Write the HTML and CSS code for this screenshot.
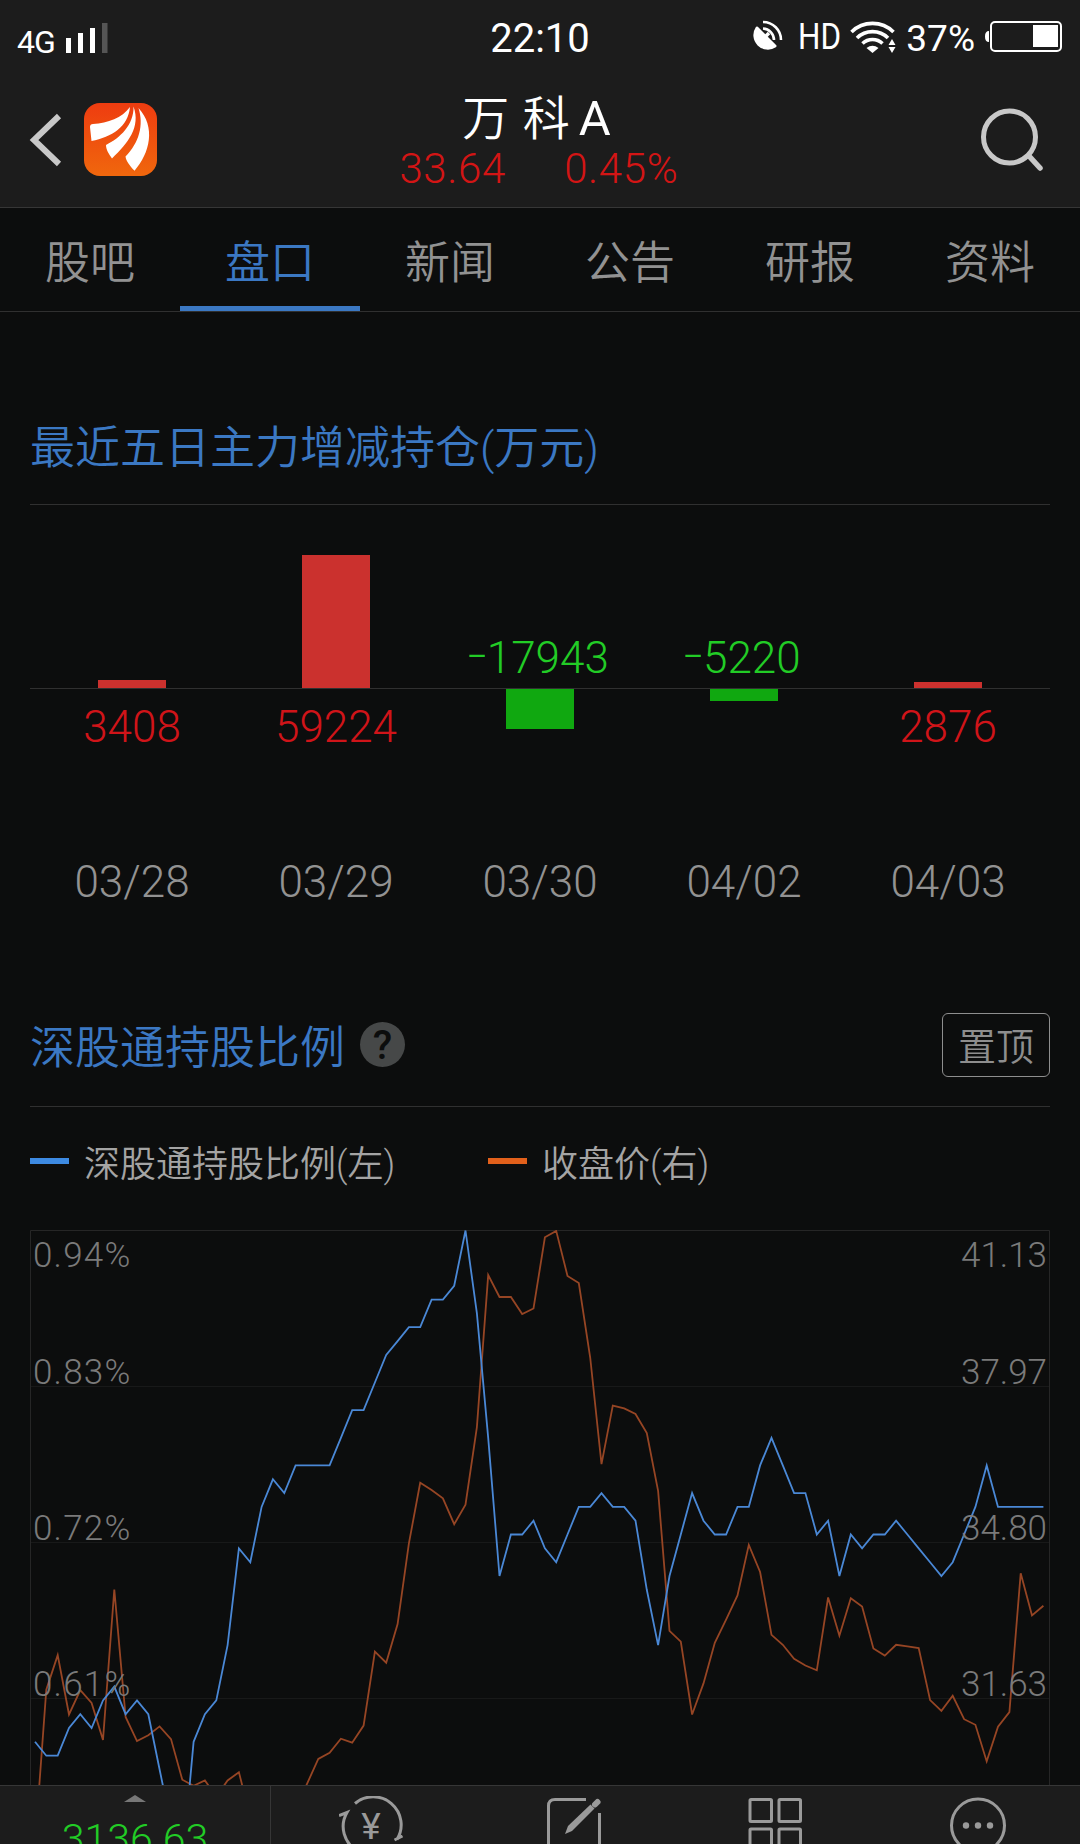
FILE: index.html
```html
<!DOCTYPE html>
<html lang="zh-CN">
<head>
    <meta charset="UTF-8">
    <meta name="viewport" content="width=device-width, initial-scale=1.0">
    <title>万科A</title>
    <link rel="stylesheet" href="styles.css">
</head>
<body>
    <header class="header">
        <div class="status-bar">
            <div class="status-left">
                <span class="network">4G</span>
                <svg class="signal" width="42" height="30" viewBox="0 0 42 30">
                    <path d="M0 15h5v15h-5zM12 10h5v20h-5zM24 5h5v25h-5z" fill="#fff"/>
                    <path d="M36 0h5.500v30h-5.500z" fill="#555"/>
                </svg>
            </div>
            <div class="clock">22:10</div>
            <div class="status-right">
                <svg width="31" height="31" viewBox="0 0 31 31">
                    <path d="M5 8L23 26A13 13 0 0 1 5 8Z" fill="#fff" stroke="#fff" stroke-width="3" stroke-linejoin="round"/>
                    <path d="M13 17L17 13" stroke="#fff" stroke-width="3.500"/>
                    <path d="M11 8.500A11.500 11.500 0 0 1 22 20M11 2A18 18 0 0 1 29 20" fill="none" stroke="#fff" stroke-width="2.600"/>
                </svg>
                <span class="hd">HD</span>
                <svg class="wifi" width="46" height="34" viewBox="0 0 46 34">
                    <g fill="none" stroke="#fff" stroke-width="3.600">
                        <path d="M1.500 12A30 30 0 0 1 43.500 12"/>
                        <path d="M7 18A22 22 0 0 1 38 18"/>
                        <path d="M12.500 23.500A14.500 14.500 0 0 1 32.500 23.500"/>
                    </g>
                    <path d="M16.500 28Q22.500 23.500 28.500 28L22.500 33Z" fill="#fff"/>
                    <path d="M38.500 25L42 19L45.500 25ZM38.500 27L42 33L45.500 27Z" fill="#fff"/>
                </svg>
                <span class="percent">37%</span>
                <svg class="battery" width="78" height="32" viewBox="0 0 78 32">
                    <path d="M4 11v11q-4 0 -4 -5.500t4 -5.500z" fill="#fff"/>
                    <rect x="6" y="2" width="70" height="29" rx="4" fill="none" stroke="#fff" stroke-width="2"/>
                    <rect x="48" y="5" width="25" height="22" fill="#fff"/>
                </svg>
            </div>
        </div>
        <div class="title-bar">
            <div class="title-left">
                <svg class="back" width="34" height="58" viewBox="0 0 34 58">
                    <path d="M31 5L6 29L31 53" fill="none" stroke="#c8c8c8" stroke-width="6"/>
                </svg>
                <svg class="logo" width="73" height="73" viewBox="0 0 73 73">
                    <defs>
                        <linearGradient id="logo-bg" x1="0" y1="0" x2="0" y2="1">
                            <stop offset="0" stop-color="#ee3c10"/>
                            <stop offset="1" stop-color="#f0670d"/>
                        </linearGradient>
                    </defs>
                    <rect width="73" height="73" rx="16" fill="url(#logo-bg)"/>
                    <g fill="#fff">
                        <path d="M6 24Q6 21.200 9 21C24 20 38 15 46 4C44 24 28 34 7.500 38Z"/>
                        <path d="M49.500 3.500C57 24 44 40 28 55.500C25 51 22 47 22 42C36 35 50 22 49.500 3.500Z"/>
                        <path d="M54.500 5C72 24 66 50 50.500 67.700C46 63 42 58 41.500 53.500C55 40 60 22 54.500 5Z"/>
                    </g>
                </svg>
            </div>
            <div class="stock">
                <div class="stock-name">万 科<span>A</span></div>
                <div class="stock-price"><span>33.64</span><span>0.45%</span></div>
            </div>
            <svg class="search" width="66" height="66" viewBox="0 0 66 66">
                <circle cx="31.500" cy="30" r="26" fill="none" stroke="#c8c8c8" stroke-width="5"/>
                <path d="M51 49L62 61" stroke="#c8c8c8" stroke-width="5.500" stroke-linecap="round"/>
            </svg>
        </div>
    </header>

    <nav class="tabs">
        <a class="tab">股吧</a>
        <a class="tab active">盘口</a>
        <a class="tab">新闻</a>
        <a class="tab">公告</a>
        <a class="tab">研报</a>
        <a class="tab">资料</a>
    </nav>

    <main class="content">
        <section class="holdings">
            <h2 class="section-title">最近五日主力增减持仓(万元)</h2>
            <div class="bars" id="bars"></div>
        </section>

        <section class="ratio">
            <div class="section-title ratio-title">
                <h2>深股通持股比例</h2>
                <span class="help">?</span>
                <button class="pin">置顶</button>
            </div>
            <div class="legend">
                <span class="legend-item"><i class="dash blue"></i>深股通持股比例(左)</span>
                <span class="legend-item"><i class="dash orange"></i>收盘价(右)</span>
            </div>
            <svg class="chart" id="chart" width="1020" height="624" viewBox="0 0 1020 624"></svg>
        </section>
    </main>

    <footer class="bottom-bar">
        <div class="index">
            <span class="arrow-up"></span>
            <span class="index-value">3136.63</span>
        </div>
        <div class="action">
            <svg width="66" height="60" viewBox="0 0 66 60">
                <g fill="none" stroke="#9a9a9a" stroke-width="3">
                    <path d="M16 7.500A28 28 0 0 1 58 43.500M55.500 44L63.500 40"/>
                    <path d="M0 19.500L8 16.500A28 28 0 0 0 18.500 55"/>
                </g>
                <text x="32" y="43" class="yen">¥</text>
            </svg>
        </div>
        <div class="action">
            <svg width="60" height="60" viewBox="0 0 60 60">
                <path d="M42 3.500H11Q4.500 3.500 4.500 10V60M55.500 17V60" fill="none" stroke="#9a9a9a" stroke-width="3"/>
                <path d="M21 38L24 30L46.500 8.500L50.500 12.500L28 35Z" fill="#9a9a9a"/>
                <path d="M51 8.500L53.500 6" stroke="#9a9a9a" stroke-width="6" stroke-linecap="round"/>
            </svg>
        </div>
        <div class="action">
            <svg width="60" height="60" viewBox="0 0 60 60">
                <g fill="none" stroke="#9a9a9a" stroke-width="3">
                    <rect x="3" y="3.500" width="21.500" height="22" rx="1"/>
                    <rect x="32" y="3.500" width="21.500" height="22" rx="1"/>
                    <rect x="3" y="33" width="21.500" height="22" rx="1"/>
                    <rect x="32" y="33" width="21.500" height="22" rx="1"/>
                </g>
            </svg>
        </div>
        <div class="action">
            <svg width="60" height="60" viewBox="0 0 60 60">
                <circle cx="29" cy="29.500" r="26.500" fill="none" stroke="#9a9a9a" stroke-width="3"/>
                <g fill="#9a9a9a">
                    <circle cx="17" cy="29.500" r="3.200"/>
                    <circle cx="29" cy="29.500" r="3.200"/>
                    <circle cx="41" cy="29.500" r="3.200"/>
                </g>
            </svg>
        </div>
    </footer>

    <script>
        const days = [
            { date: "03/28", value: 3408 },
            { date: "03/29", value: 59224 },
            { date: "03/30", value: -17943 },
            { date: "04/02", value: -5220 },
            { date: "04/03", value: 2876 }
        ];

        // distance below the 0.94% maximum, in steps of 0.01%
        const ratioDrop = [
            37, 38, 38, 36, 35, 36, 34, 33, 35, 34, 35, 39, 43, 46, 37, 35, 34, 30,
            23, 24, 20, 18, 19, 17, 17, 17, 17, 15, 13, 13, 11, 9, 8, 7, 7, 5,
            5, 4, 0, 6, 15, 25, 22, 22, 21, 23, 24, 22, 20, 20, 19, 20, 20, 21,
            26, 30, 25, 22, 19, 21, 22, 22, 20, 20, 17, 15, 17, 19, 19, 22, 21, 25,
            22, 23, 22, 22, 21, 22, 23, 24, 25, 24, 22, 20, 17, 20, 20, 20, 20, 20
        ];

        // distance below the 41.13 maximum, in chart units
        const priceDrop = [
            1542, 1154, 1067, 1216, 1155, 1187, 1280, 902, 1222, 1283, 1268, 1246, 1278, 1380, 1395, 1382, 1422, 1382,
            1361, 1474, 1514, 1534, 1514, 1454, 1391, 1328, 1312, 1277, 1287, 1244, 1058, 1086, 989, 786, 634, 652,
            673, 738, 689, 494, 112, 167, 167, 210, 196, 17, 1, 114, 132, 319, 587, 440, 447, 461,
            509, 654, 1006, 1033, 1216, 1138, 1036, 978, 917, 790, 858, 1016, 1041, 1076, 1093, 1105, 922, 1018,
            924, 945, 1050, 1068, 1041, 1045, 1049, 1180, 1207, 1169, 1228, 1242, 1334, 1247, 1210, 861, 967, 943
        ];

        const bars = document.getElementById("bars");
        const chart = document.getElementById("chart");

        days.forEach(day => {
            const up = day.value > 0;
            const height = Math.round(Math.abs(day.value) / 59224 * 133);
            const bar = `<div class="bar" style="height: ${height}px"></div>`;
            const sign = up ? "" : `<span class="sign">-</span>`;
            const label = `<div class="value">${sign}${Math.abs(day.value)}</div>`;
            bars.innerHTML += `
                <div class="day ${up ? "up" : "down"}">
                    <div class="above">${up ? bar : label}</div>
                    <div class="below">${up ? label : bar}</div>
                    <div class="date">${day.date}</div>
                </div>`;
        });

        function line(values, scale, className) {
            const points = values.map((v, i) => `${(5 + i * 11.33).toFixed(1)},${(0.5 + v * scale).toFixed(1)}`);
            return `<polyline class="${className}" points="${points.join(" ")}"/>`;
        }

        let svg = `<path class="frame" d="M0.5 624V0.5H1019.5V624"/>`;
        [156, 312, 468].forEach(y => {
            svg += `<path class="grid" d="M1 ${y}.5H1019"/>`;
        });
        svg += line(priceDrop, 0.398, "price-line");
        svg += line(ratioDrop, 13.82, "ratio-line");

        const labels = [
            [37, "0.94%", "41.13"],
            [154, "0.83%", "37.97"],
            [310, "0.72%", "34.80"],
            [466, "0.61%", "31.63"]
        ];
        labels.forEach(([y, left, right]) => {
            svg += `<text class="axis left" x="3" y="${y}">${left}</text>`;
            svg += `<text class="axis right" x="1017" y="${y}">${right}</text>`;
        });
        chart.innerHTML = svg;
    </script>
</body>
</html>
```
FILE: styles.css
```css
* {
    box-sizing: border-box;
}

body {
    margin: 0;
    height: 1844px;
    display: flex;
    flex-direction: column;
    overflow: hidden;
    background-color: #0c0d0d;
    color: #929292;
    font-family: Roboto, "Noto Sans CJK SC", sans-serif;
    font-weight: 350;
}

svg {
    display: block;
    flex-shrink: 0;
}

h2 {
    margin: 0;
    font-size: inherit;
    font-weight: inherit;
}

.header {
    height: 208px;
    flex-shrink: 0;
    background-color: #1c1c1c;
    border-bottom: 1px solid #363636;
}

.status-bar {
    display: grid;
    grid-template-columns: 1fr auto 1fr;
    height: 74px;
    padding: 0 17px;
    color: #fff;
    font-weight: 400;
}

.status-left {
    display: flex;
    align-items: flex-start;
    padding-top: 23px;
}

.network {
    width: 49px;
    padding-top: 4px;
    font-size: 32px;
    line-height: 30px;
    letter-spacing: -1px;
}

.clock {
    font-size: 40px;
    line-height: 77px;
}

.status-right {
    display: flex;
    justify-content: flex-end;
    align-items: flex-start;
    padding-top: 20px;
}

.hd {
    width: 49px;
    margin-left: 15px;
    font-size: 37px;
    line-height: 34px;
    transform: scaleX(0.85);
    transform-origin: left;
}

.wifi {
    margin-left: 3px;
}

.percent {
    margin: 0 10px 0 10px;
    font-size: 37px;
    line-height: 37px;
}

.title-bar {
    display: grid;
    grid-template-columns: 1fr auto 1fr;
    padding: 0 30px 0 28px;
}

.title-left {
    display: flex;
    align-items: center;
    height: 73px;
    margin-top: 29px;
}

.logo {
    margin-left: 22px;
}

.stock {
    text-align: center;
}

.stock-name {
    margin-top: 16px;
    margin-left: -5px;
    font-size: 47px;
    line-height: 57px;
    color: #fff;
    word-spacing: 2px;
}

.stock-name span {
    margin-left: 9px;
    font-size: 49px;
    font-weight: 400;
}

.stock-price {
    display: flex;
    gap: 58px;
    color: #d31515;
    font-size: 42px;
    line-height: 44px;
    letter-spacing: 0.7px;
}

.search {
    justify-self: end;
    margin: 33px 6px 0 0;
}

.tabs {
    display: flex;
    height: 104px;
    flex-shrink: 0;
    border-bottom: 1px solid #303030;
}

.tab {
    flex: 1;
    text-align: center;
    font-size: 45px;
    line-height: 111px;
}

.tab.active {
    color: #3b78c3;
    border-bottom: 5px solid #3b78c3;
}

.content {
    flex: 1;
    min-height: 0;
    padding: 78px 30px 0;
    overflow: hidden;
}

.section-title {
    height: 115px;
    border-bottom: 1px solid #303030;
    color: #3b78c3;
    font-size: 45px;
    line-height: 118px;
}

.bars {
    display: grid;
    grid-template-columns: repeat(5, 1fr);
    height: 487px;
    font-size: 44px;
    text-align: center;
}

.above {
    display: flex;
    flex-direction: column;
    justify-content: flex-end;
    align-items: center;
    height: 184px;
    border-bottom: 1px solid #303030;
}

.below {
    display: flex;
    flex-direction: column;
    align-items: center;
    height: 168px;
}

.bar {
    width: 68px;
}

.up .bar {
    background-color: #cb312e;
}

.down .bar {
    background-color: #10a810;
}

.value {
    line-height: 50px;
}

.up .value {
    margin-top: 13px;
    color: #d01419;
}

.down .value {
    margin-bottom: 5px;
    color: #22cc26;
}

.sign {
    display: inline-block;
    margin-right: 3px;
    transform: translateY(-3px) scaleX(1.5);
}

.date {
    line-height: 50px;
}

.ratio-title {
    display: flex;
    align-items: center;
}

.help {
    width: 45px;
    height: 45px;
    margin: 0 0 9px 15px;
    border-radius: 50%;
    background-color: #464848;
    color: #0c0d0d;
    font-size: 40px;
    font-weight: 500;
    line-height: 47px;
    text-align: center;
}

.pin {
    width: 108px;
    height: 64px;
    margin: 0 0 8px auto;
    padding: 0;
    border: 1px solid #8e8e8e;
    border-radius: 6px;
    background: none;
    color: #8e8e8e;
    font: inherit;
    font-size: 38px;
    line-height: 66px;
}

.legend {
    display: flex;
    height: 123px;
    padding-bottom: 16px;
    color: #a4a4a4;
    font-size: 36px;
}

.legend-item {
    display: flex;
    align-items: center;
    width: 458px;
}

.dash {
    width: 39px;
    height: 6px;
    margin-right: 15px;
}

.blue {
    background-color: #3d8ae2;
}

.orange {
    background-color: #e2601b;
}

.frame {
    fill: none;
    stroke: #262626;
}

.grid {
    stroke: #181919;
}

.price-line,
.ratio-line {
    fill: none;
    stroke-width: 1.8;
}

.price-line {
    stroke: #964524;
}

.ratio-line {
    stroke: #4a88d6;
}

.axis {
    fill: #7a7a7a;
    font-size: 35px;
}

.left {
    letter-spacing: 1.2px;
}

.right {
    text-anchor: end;
}

.bottom-bar {
    display: flex;
    height: 59px;
    flex-shrink: 0;
    overflow: hidden;
    background-color: #1c1c1c;
    border-top: 1px solid #363636;
}

.index {
    display: flex;
    flex-direction: column;
    align-items: center;
    width: 271px;
    padding-top: 9px;
    border-right: 1px solid #363636;
}

.arrow-up {
    border-left: 11px solid transparent;
    border-right: 11px solid transparent;
    border-bottom: 7px solid #777;
}

.index-value {
    margin-top: 14px;
    color: #22cc26;
    font-size: 41px;
    line-height: 46px;
}

.action {
    display: flex;
    flex: 1;
    justify-content: center;
    padding-top: 10px;
}

.yen {
    fill: #9a9a9a;
    font-size: 37px;
    font-weight: 400;
    text-anchor: middle;
}
```
